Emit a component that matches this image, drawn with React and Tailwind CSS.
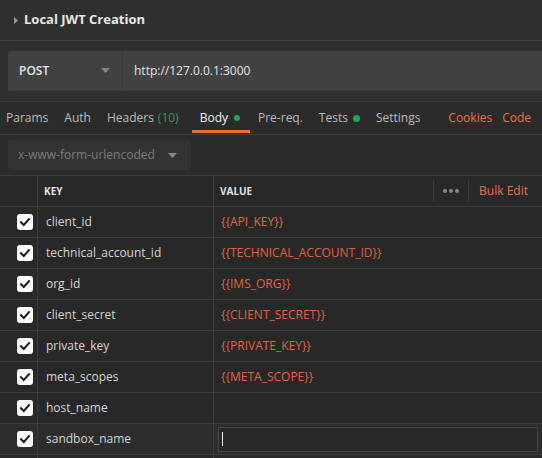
import React from "react";

const rows = [
  { k: "client_id", v: "{{API_KEY}}" },
  { k: "technical_account_id", v: "{{TECHNICAL_ACCOUNT_ID}}" },
  { k: "org_id", v: "{{IMS_ORG}}" },
  { k: "client_secret", v: "{{CLIENT_SECRET}}" },
  { k: "private_key", v: "{{PRIVATE_KEY}}" },
  { k: "meta_scopes", v: "{{META_SCOPE}}" },
  { k: "host_name", v: "" },
];

function Check() {
  return (
    <div className="w-[16px] h-[16px] bg-white rounded-[3px] flex items-center justify-center">
      <svg width="12" height="12" viewBox="0 0 12 12">
        <path d="M2 6.2 L4.8 9 L10 3.2" fill="none" stroke="#1a1a1a" strokeWidth="2" strokeLinecap="square" />
      </svg>
    </div>
  );
}

function Caret({ color = "#8a8a8a" }) {
  return (
    <svg width="9" height="5" viewBox="0 0 9 5">
      <path d="M0 0 L9 0 L4.5 5 Z" fill={color} />
    </svg>
  );
}

export default function App() {
  return (
    <div
      className="w-[542px] h-[458px] overflow-hidden bg-[#303030] text-[12px] text-[#d2d2d2]"
      style={{ fontFamily: '"Open Sans", "Noto Sans", sans-serif' }}
    >
      {/* title */}
      <div className="h-[41px] flex items-center border-b border-[#454545] pl-[14px]">
        <svg width="4" height="7" viewBox="0 0 4 7" className="mr-[6px]">
          <path d="M0 0 L4 3.5 L0 7 Z" fill="#9a9a9a" />
        </svg>
        <span className="font-bold text-[13px] text-[#e8e8e8]">Local JWT Creation</span>
      </div>

      {/* url bar */}
      <div className="pt-[10px] pl-[8px] h-[60px]">
        <div className="flex h-[40px] w-[560px] bg-[#424242] rounded-[2px] border-b border-[#3a3a3a]">
          <div className="w-[115px] flex items-center justify-between pl-[11px] pr-[12px] border-r border-[#3a3a3a]">
            <span className="font-semibold text-[#e6e6e6]">POST</span>
            <Caret color="#858585" />
          </div>
          <div className="flex items-center pl-[11px] text-[#e6e6e6]">http://127.0.0.1:3000</div>
        </div>
      </div>

      {/* tabs */}
      <div className="bg-[#2b2b2b] border-t border-[#3c3c3c]">
        <div className="h-[33px] flex items-stretch border-b border-[#3c3c3c] text-[#bcbcbc]">
          <div className="flex items-center px-[8px] ml-[-2px]">Params</div>
          <div className="flex items-center px-[8px]">Auth</div>
          <div className="flex items-center px-[8px]">
            Headers <span className="text-[#2e9f52] ml-[4px]">(10)</span>
          </div>
          <div className="relative flex items-center pl-[8px] pr-[10px] ml-[5px] text-[#f2f2f2]">
            Body
            <span className="ml-[6px] w-[6px] h-[6px] rounded-full bg-[#1fa84f]" />
            <div className="absolute left-0 right-0 bottom-[1px] h-[3px] bg-[#f26b3a]" />
          </div>
          <div className="flex items-center px-[8px]">Pre-req.</div>
          <div className="flex items-center px-[8px]">
            Tests
            <span className="ml-[5px] w-[7px] h-[7px] rounded-full bg-[#1fa84f]" />
          </div>
          <div className="flex items-center px-[8px]">Settings</div>
          <div className="ml-auto flex items-center gap-[10px] pr-[11px] text-[#f0703f]">
            <span>Cookies</span>
            <span>Code</span>
          </div>
        </div>

        {/* body type */}
        <div className="h-[41px] flex items-start pt-[5px] pl-[8px] border-b border-[#3c3c3c]">
          <div className="w-[183px] h-[30px] bg-[#333333] rounded-[3px] flex items-center justify-between pl-[10px] pr-[14px] text-[#7c7c7c]">
            <span>x-www-form-urlencoded</span>
            <Caret color="#8a8a8a" />
          </div>
        </div>

        {/* table */}
        <div className="bg-[#282828]">
          <div className="grid grid-cols-[38px_176px_1fr] h-[31px] border-b border-[#3c3c3c] text-[10px] font-bold text-[#e2e2e2]">
            <div className="border-r border-[#3c3c3c]" />
            <div className="border-r border-[#3c3c3c] flex items-center pl-[6px]">KEY</div>
            <div className="flex items-center pl-[6px]">
              <span>VALUE</span>
              <div className="ml-auto flex items-center h-full">
                <div className="w-px h-[22px] bg-[#3c3c3c]" />
                <div className="flex gap-[2px] px-[9px]">
                  <span className="w-[4px] h-[4px] rounded-full bg-[#8a8a8a]" />
                  <span className="w-[4px] h-[4px] rounded-full bg-[#8a8a8a]" />
                  <span className="w-[4px] h-[4px] rounded-full bg-[#8a8a8a]" />
                </div>
                <div className="w-px h-[22px] bg-[#3c3c3c]" />
                <span className="pl-[10px] pr-[14px] text-[12px] font-normal text-[#f0703f]">Bulk Edit</span>
              </div>
            </div>
          </div>

          {rows.map((r) => (
            <div key={r.k} className="grid grid-cols-[38px_176px_1fr] h-[31px] border-b border-[#3c3c3c]">
              <div className="border-r border-[#3c3c3c] flex items-center justify-end pr-[4px]">
                <Check />
              </div>
              <div className="border-r border-[#3c3c3c] flex items-center pl-[8px] text-[#d6d6d6]">{r.k}</div>
              <div className="flex items-center pl-[7px] text-[#e2643a]">{r.v}</div>
            </div>
          ))}

          <div className="grid grid-cols-[38px_176px_1fr] h-[31px] border-b border-[#3c3c3c] bg-[#2d2d2d]">
            <div className="border-r border-[#3c3c3c] flex items-center justify-end pr-[4px]">
              <Check />
            </div>
            <div className="border-r border-[#3c3c3c] flex items-center pl-[8px] text-[#d6d6d6]">sandbox_name</div>
            <div className="flex items-center pl-[4px] pr-[4px]">
              <div className="w-full h-[25px] border border-[#474747] bg-[#282828] flex items-center pl-[3px]">
                <div className="w-px h-[14px] bg-[#f0f0f0]" />
              </div>
            </div>
          </div>

          <div className="grid grid-cols-[38px_176px_1fr] h-[31px]">
            <div className="border-r border-[#3c3c3c]" />
            <div className="border-r border-[#3c3c3c]" />
            <div />
          </div>
        </div>
      </div>
    </div>
  );
}
